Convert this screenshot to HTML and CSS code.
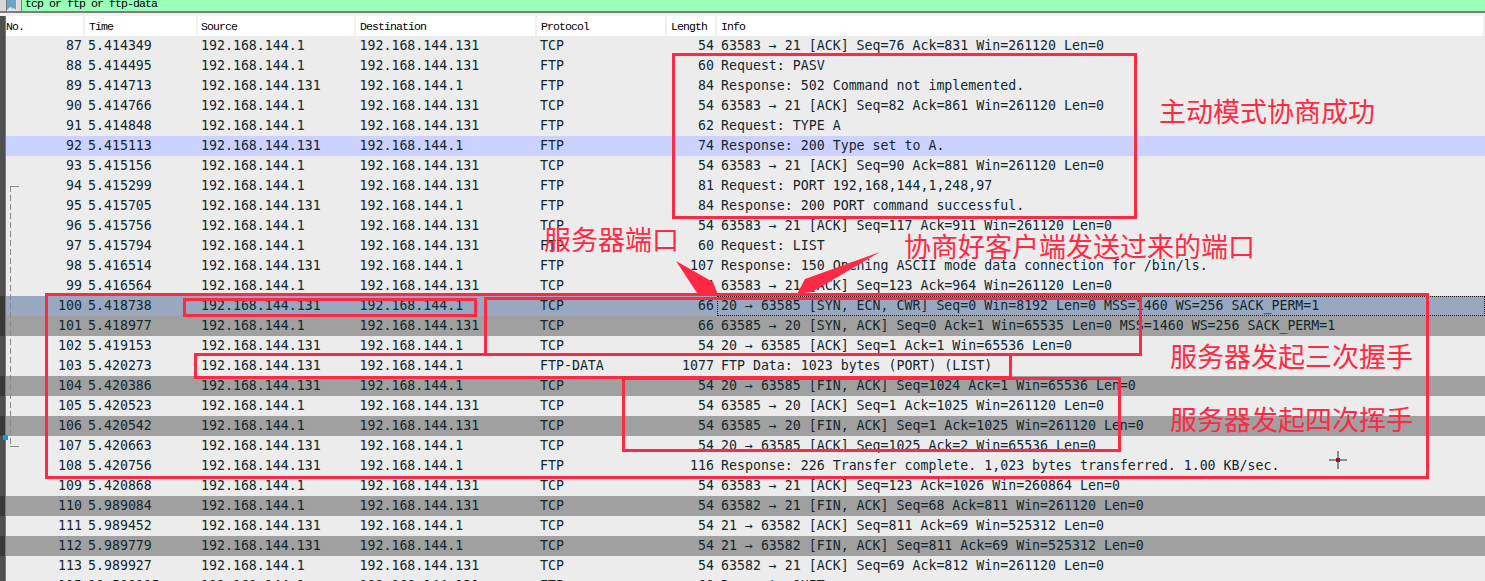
FILE: index.html
```html
<!DOCTYPE html>
<html lang="zh">
<head>
<meta charset="utf-8">
<title>Wireshark FTP capture</title>
<link rel="stylesheet" href="styles.css">
</head>
<body>
<div class="app">
  <div class="filterbar">
    <div class="edge"></div>
    <svg class="bookmark" width="10" height="11" viewBox="0 0 10 11"><path d="M0 0H9V10L7 8L5.500 9L4 7L2 8L0 10Z" fill="#6ca5c4"/></svg>
    <div class="filter">tcp or ftp or ftp-data</div>
  </div>
  <div class="rule"></div>
  <div class="row head">
    <span class="mark"></span><span class="c-no">No.</span><span class="c-time">Time</span><span class="c-src">Source</span><span class="c-dst">Destination</span><span class="c-proto">Protocol</span><span class="c-len">Length</span><span class="c-info">Info</span>
  </div>
  <div class="row"><span class="mark"></span><span class="c-no">87</span><span class="c-time">5.414349</span><span class="c-src">192.168.144.1</span><span class="c-dst">192.168.144.131</span><span class="c-proto">TCP</span><span class="c-len">54</span><span class="c-info">63583 → 21 [ACK] Seq=76 Ack=831 Win=261120 Len=0</span></div>
  <div class="row"><span class="mark"></span><span class="c-no">88</span><span class="c-time">5.414495</span><span class="c-src">192.168.144.1</span><span class="c-dst">192.168.144.131</span><span class="c-proto">FTP</span><span class="c-len">60</span><span class="c-info">Request: PASV</span></div>
  <div class="row"><span class="mark"></span><span class="c-no">89</span><span class="c-time">5.414713</span><span class="c-src">192.168.144.131</span><span class="c-dst">192.168.144.1</span><span class="c-proto">FTP</span><span class="c-len">84</span><span class="c-info">Response: 502 Command not implemented.</span></div>
  <div class="row"><span class="mark"></span><span class="c-no">90</span><span class="c-time">5.414766</span><span class="c-src">192.168.144.1</span><span class="c-dst">192.168.144.131</span><span class="c-proto">TCP</span><span class="c-len">54</span><span class="c-info">63583 → 21 [ACK] Seq=82 Ack=861 Win=261120 Len=0</span></div>
  <div class="row"><span class="mark"></span><span class="c-no">91</span><span class="c-time">5.414848</span><span class="c-src">192.168.144.1</span><span class="c-dst">192.168.144.131</span><span class="c-proto">FTP</span><span class="c-len">62</span><span class="c-info">Request: TYPE A</span></div>
  <div class="row related"><span class="mark"></span><span class="c-no">92</span><span class="c-time">5.415113</span><span class="c-src">192.168.144.131</span><span class="c-dst">192.168.144.1</span><span class="c-proto">FTP</span><span class="c-len">74</span><span class="c-info">Response: 200 Type set to A.</span></div>
  <div class="row"><span class="mark"></span><span class="c-no">93</span><span class="c-time">5.415156</span><span class="c-src">192.168.144.1</span><span class="c-dst">192.168.144.131</span><span class="c-proto">TCP</span><span class="c-len">54</span><span class="c-info">63583 → 21 [ACK] Seq=90 Ack=881 Win=261120 Len=0</span></div>
  <div class="row"><span class="mark"></span><span class="c-no">94</span><span class="c-time">5.415299</span><span class="c-src">192.168.144.1</span><span class="c-dst">192.168.144.131</span><span class="c-proto">FTP</span><span class="c-len">81</span><span class="c-info">Request: PORT 192,168,144,1,248,97</span></div>
  <div class="row"><span class="mark"></span><span class="c-no">95</span><span class="c-time">5.415705</span><span class="c-src">192.168.144.131</span><span class="c-dst">192.168.144.1</span><span class="c-proto">FTP</span><span class="c-len">84</span><span class="c-info">Response: 200 PORT command successful.</span></div>
  <div class="row"><span class="mark"></span><span class="c-no">96</span><span class="c-time">5.415756</span><span class="c-src">192.168.144.1</span><span class="c-dst">192.168.144.131</span><span class="c-proto">TCP</span><span class="c-len">54</span><span class="c-info">63583 → 21 [ACK] Seq=117 Ack=911 Win=261120 Len=0</span></div>
  <div class="row"><span class="mark"></span><span class="c-no">97</span><span class="c-time">5.415794</span><span class="c-src">192.168.144.1</span><span class="c-dst">192.168.144.131</span><span class="c-proto">FTP</span><span class="c-len">60</span><span class="c-info">Request: LIST</span></div>
  <div class="row"><span class="mark"></span><span class="c-no">98</span><span class="c-time">5.416514</span><span class="c-src">192.168.144.131</span><span class="c-dst">192.168.144.1</span><span class="c-proto">FTP</span><span class="c-len">107</span><span class="c-info">Response: 150 Opening ASCII mode data connection for /bin/ls.</span></div>
  <div class="row"><span class="mark"></span><span class="c-no">99</span><span class="c-time">5.416564</span><span class="c-src">192.168.144.1</span><span class="c-dst">192.168.144.131</span><span class="c-proto">TCP</span><span class="c-len">54</span><span class="c-info">63583 → 21 [ACK] Seq=123 Ack=964 Win=261120 Len=0</span></div>
  <div class="row selected"><span class="mark"></span><span class="c-no">100</span><span class="c-time">5.418738</span><span class="c-src">192.168.144.131</span><span class="c-dst">192.168.144.1</span><span class="c-proto">TCP</span><span class="c-len">66</span><span class="c-info">20 → 63585 [SYN, ECN, CWR] Seq=0 Win=8192 Len=0 MSS=1460 WS=256 SACK_PERM=1</span></div>
  <div class="row flag"><span class="mark"></span><span class="c-no">101</span><span class="c-time">5.418977</span><span class="c-src">192.168.144.1</span><span class="c-dst">192.168.144.131</span><span class="c-proto">TCP</span><span class="c-len">66</span><span class="c-info">63585 → 20 [SYN, ACK] Seq=0 Ack=1 Win=65535 Len=0 MSS=1460 WS=256 SACK_PERM=1</span></div>
  <div class="row"><span class="mark"></span><span class="c-no">102</span><span class="c-time">5.419153</span><span class="c-src">192.168.144.131</span><span class="c-dst">192.168.144.1</span><span class="c-proto">TCP</span><span class="c-len">54</span><span class="c-info">20 → 63585 [ACK] Seq=1 Ack=1 Win=65536 Len=0</span></div>
  <div class="row"><span class="mark"></span><span class="c-no">103</span><span class="c-time">5.420273</span><span class="c-src">192.168.144.131</span><span class="c-dst">192.168.144.1</span><span class="c-proto">FTP-DATA</span><span class="c-len">1077</span><span class="c-info">FTP Data: 1023 bytes (PORT) (LIST)</span></div>
  <div class="row flag"><span class="mark"></span><span class="c-no">104</span><span class="c-time">5.420386</span><span class="c-src">192.168.144.131</span><span class="c-dst">192.168.144.1</span><span class="c-proto">TCP</span><span class="c-len">54</span><span class="c-info">20 → 63585 [FIN, ACK] Seq=1024 Ack=1 Win=65536 Len=0</span></div>
  <div class="row"><span class="mark"></span><span class="c-no">105</span><span class="c-time">5.420523</span><span class="c-src">192.168.144.1</span><span class="c-dst">192.168.144.131</span><span class="c-proto">TCP</span><span class="c-len">54</span><span class="c-info">63585 → 20 [ACK] Seq=1 Ack=1025 Win=261120 Len=0</span></div>
  <div class="row flag"><span class="mark"></span><span class="c-no">106</span><span class="c-time">5.420542</span><span class="c-src">192.168.144.1</span><span class="c-dst">192.168.144.131</span><span class="c-proto">TCP</span><span class="c-len">54</span><span class="c-info">63585 → 20 [FIN, ACK] Seq=1 Ack=1025 Win=261120 Len=0</span></div>
  <div class="row"><span class="mark"></span><span class="c-no">107</span><span class="c-time">5.420663</span><span class="c-src">192.168.144.131</span><span class="c-dst">192.168.144.1</span><span class="c-proto">TCP</span><span class="c-len">54</span><span class="c-info">20 → 63585 [ACK] Seq=1025 Ack=2 Win=65536 Len=0</span></div>
  <div class="row"><span class="mark"></span><span class="c-no">108</span><span class="c-time">5.420756</span><span class="c-src">192.168.144.131</span><span class="c-dst">192.168.144.1</span><span class="c-proto">FTP</span><span class="c-len">116</span><span class="c-info">Response: 226 Transfer complete. 1,023 bytes transferred. 1.00 KB/sec.</span></div>
  <div class="row"><span class="mark"></span><span class="c-no">109</span><span class="c-time">5.420868</span><span class="c-src">192.168.144.1</span><span class="c-dst">192.168.144.131</span><span class="c-proto">TCP</span><span class="c-len">54</span><span class="c-info">63583 → 21 [ACK] Seq=123 Ack=1026 Win=260864 Len=0</span></div>
  <div class="row flag"><span class="mark"></span><span class="c-no">110</span><span class="c-time">5.989084</span><span class="c-src">192.168.144.1</span><span class="c-dst">192.168.144.131</span><span class="c-proto">TCP</span><span class="c-len">54</span><span class="c-info">63582 → 21 [FIN, ACK] Seq=68 Ack=811 Win=261120 Len=0</span></div>
  <div class="row"><span class="mark"></span><span class="c-no">111</span><span class="c-time">5.989452</span><span class="c-src">192.168.144.131</span><span class="c-dst">192.168.144.1</span><span class="c-proto">TCP</span><span class="c-len">54</span><span class="c-info">21 → 63582 [ACK] Seq=811 Ack=69 Win=525312 Len=0</span></div>
  <div class="row flag"><span class="mark"></span><span class="c-no">112</span><span class="c-time">5.989779</span><span class="c-src">192.168.144.131</span><span class="c-dst">192.168.144.1</span><span class="c-proto">TCP</span><span class="c-len">54</span><span class="c-info">21 → 63582 [FIN, ACK] Seq=811 Ack=69 Win=525312 Len=0</span></div>
  <div class="row"><span class="mark"></span><span class="c-no">113</span><span class="c-time">5.989927</span><span class="c-src">192.168.144.1</span><span class="c-dst">192.168.144.131</span><span class="c-proto">TCP</span><span class="c-len">54</span><span class="c-info">63582 → 21 [ACK] Seq=69 Ack=812 Win=261120 Len=0</span></div>
  <div class="row"><span class="mark"></span><span class="c-no">115</span><span class="c-time">10.500115</span><span class="c-src">192.168.144.1</span><span class="c-dst">192.168.144.131</span><span class="c-proto">FTP</span><span class="c-len">60</span><span class="c-info">Request: QUIT</span></div>

  <div class="conv"></div>
  <div class="scrollmark"></div>

  <div class="box box-mode"></div>
  <div class="box box-all"></div>
  <div class="box box-addr"></div>
  <div class="box box-syn"></div>
  <div class="box box-data"></div>
  <div class="box box-fin"></div>

  <svg class="arrows" width="1485" height="581" viewBox="0 0 1485 581">
    <path d="M676 261L713 282L718 295L697 293Z"/>
    <path d="M880 252L812 292L797 294L805 279Z"/>
  </svg>

  <div class="note note-mode">主动模式协商成功</div>
  <div class="note note-server">服务器端口</div>
  <div class="note note-client">协商好客户端发送过来的端口</div>
  <div class="note note-three">服务器发起三次握手</div>
  <div class="note note-four">服务器发起四次挥手</div>

  <svg class="cross" width="18" height="18" viewBox="0 0 18 18">
    <path d="M9 0V18M0 9H18" stroke="#0c3a4a" stroke-width="1"/>
    <rect x="7" y="7" width="4" height="4" fill="#a80f16"/>
  </svg>
</div>
</body>
</html>
```
FILE: styles.css
```css
* { box-sizing: border-box; }
html, body { margin: 0; padding: 0; background: #ececec; }
.app {
  position: relative;
  width: 1485px;
  height: 581px;
  overflow: hidden;
  display: flex;
  flex-direction: column;
  font-family: "DejaVu Sans Mono", "Liberation Mono", monospace;
  font-size: 13.25px;
  color: #12272e;
}
.filterbar {
  flex: none;
  height: 11px;
  display: flex;
  background: #dcdcdc;
}
.edge { width: 7px; background: #d8d8d8; border-right: 1px solid #777; }
.bookmark { flex: none; margin-right: 4px; background: #e6e6e6; }
.filter {
  flex: 1;
  background: #9bffb9;
  border-left: 1px solid #7a7a7a;
  padding-left: 3px;
  font-family: "Liberation Mono", monospace;
  font-size: 11.5px;
  letter-spacing: -0.9px;
  line-height: 7px;
  color: #000;
  overflow: hidden;
}
.rule {
  flex: none;
  height: 5px;
  border-top: 2px solid #7d7d7d;
  background: #f0f0f0;
}
.row {
  flex: none;
  height: 20px;
  line-height: 20px;
  display: grid;
  grid-template-columns: 6px 79px 113px 158px 181px 130px 50px 1fr;
  background: #ececec;
  white-space: pre;
}
.mark { background: #4f4f4f; border-right: 1px solid #0d9be8; }
.c-no { text-align: right; padding-right: 3px; }
.c-time { padding-left: 3px; }
.c-src { padding-left: 3px; }
.c-dst { padding-left: 3.5px; }
.c-proto { padding-left: 3px; }
.c-len { text-align: right; padding-right: 3px; }
.c-info { padding-left: 4px; }
.row.related { background: #ccd2ff; }
.row.flag { background: #a0a0a0; }
.row.flag .mark { background: #383838; }
.row.selected { background: #98a8c0; }
.row.selected .mark { background: #383838; }
.row.selected .c-info { outline: 1px dotted #1a1a1a; outline-offset: -1px; }
.row.head {
  background: #fff;
  font-family: "Liberation Mono", monospace;
  font-size: 11.5px;
  letter-spacing: -0.9px;
  line-height: 21px;
  color: #000;
}
.row.head > span:not(.mark) { border-right: 2px solid #f0f0f0; text-align: left; padding-right: 0; }
.row.head .mark { background: #4f4f4f; }
.row.head .c-no { padding-left: 0; }
.row.head .c-time { padding-left: 4px; }
.row.head .c-dst { padding-left: 4px; }
.row.head .c-proto { padding-left: 4px; }
.row.head .c-len { padding-left: 4px; }
.row.head .c-info { border-right: none; }

.conv {
  position: absolute;
  left: 10px;
  top: 186px;
  width: 9px;
  height: 261px;
  background: repeating-linear-gradient(to bottom, #8a8a8a 0 6px, transparent 6px 9px) left top / 1px 100% no-repeat;
}
.conv::before, .conv::after {
  content: "";
  position: absolute;
  left: 0;
  width: 9px;
  height: 1px;
  background: #8a8a8a;
}
.conv::before { top: 0; }
.conv::after { bottom: 0; }
.scrollmark {
  position: absolute;
  left: 3px;
  top: 435px;
  width: 5px;
  height: 5px;
  background: #0d9be8;
}

.box {
  position: absolute;
  border: 3px solid #fe2a45;
}
.box-mode { left: 672px; top: 53px; width: 465px; height: 166px; }
.box-all { left: 45px; top: 293px; width: 1384px; height: 186px; }
.box-addr { left: 183px; top: 298px; width: 294px; height: 19px; }
.box-syn { left: 484px; top: 297px; width: 658px; height: 59px; }
.box-data { left: 194px; top: 353px; width: 818px; height: 26px; }
.box-fin { left: 622px; top: 377px; width: 499px; height: 75px; }

.arrows { position: absolute; left: 0; top: 0; fill: #fe2a45; }

.note {
  position: absolute;
  font-family: "Noto Sans CJK SC", sans-serif;
  font-size: 27px;
  line-height: 32px;
  color: #fe2a45;
  white-space: nowrap;
}
.note-mode { left: 1159px; top: 95px; }
.note-server { left: 544px; top: 223px; }
.note-client { left: 904px; top: 230px; }
.note-three { left: 1170px; top: 340px; }
.note-four { left: 1170px; top: 403px; }

.cross { position: absolute; left: 1329px; top: 451px; }
```
